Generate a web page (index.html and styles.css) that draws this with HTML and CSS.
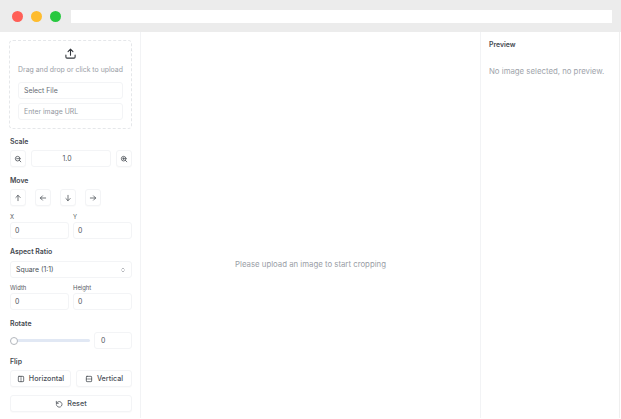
FILE: index.html
```html
<!DOCTYPE html>
<html lang="en">
<head>
<meta charset="utf-8">
<title>Image Crop</title>
<link rel="stylesheet" href="styles.css">
</head>
<body>
<div class="window">
  <header class="chrome">
    <span class="dot red"></span><span class="dot yellow"></span><span class="dot green"></span>
    <div class="address"></div>
  </header>
  <main class="app">
    <aside class="sidebar">
      <section class="drop">
        <svg class="upload" viewBox="0 0 24 24"><path d="M12 15V4M7.500 8.500 12 4l4.500 4.500M3.500 15v3.500a2 2 0 0 0 2 2h13a2 2 0 0 0 2-2V15"/></svg>
        <p class="drop-text">Drag and drop or click to upload</p>
        <div class="field drop-field dark">Select File</div>
        <div class="field drop-field muted">Enter image URL</div>
      </section>

      <h3 class="label scale-label">Scale</h3>
      <div class="row scale-row">
        <button class="btn square"><svg class="ico" viewBox="0 0 24 24"><circle cx="11" cy="11" r="7"/><path d="m20.500 20.500-4.500-4.500M8 11h6"/></svg></button>
        <div class="field center grow">1.0</div>
        <button class="btn square"><svg class="ico" viewBox="0 0 24 24"><circle cx="11" cy="11" r="7"/><path d="m20.500 20.500-4.500-4.500M8 11h6M11 8v6"/></svg></button>
      </div>

      <h3 class="label">Move</h3>
      <div class="row move-row">
        <button class="btn square"><svg class="ico" viewBox="0 0 24 24"><path d="M12 20V4M5.500 10.500 12 4l6.500 6.500"/></svg></button>
        <button class="btn square"><svg class="ico" viewBox="0 0 24 24"><path d="M20 12H4M10.500 5.500 4 12l6.500 6.500"/></svg></button>
        <button class="btn square"><svg class="ico" viewBox="0 0 24 24"><path d="M12 4v16M5.500 13.500 12 20l6.500-6.500"/></svg></button>
        <button class="btn square"><svg class="ico" viewBox="0 0 24 24"><path d="M4 12h16M13.500 5.500 20 12l-6.500 6.500"/></svg></button>
      </div>
      <div class="pair">
        <div class="col"><span class="mini">X</span><div class="field">0</div></div>
        <div class="col"><span class="mini">Y</span><div class="field">0</div></div>
      </div>

      <h3 class="label aspect-label">Aspect Ratio</h3>
      <div class="field select"><span>Square (1:1)</span>
        <svg class="chev" viewBox="0 0 24 24"><path d="m7 9 5-5 5 5M7 15l5 5 5-5"/></svg>
      </div>
      <div class="pair wh">
        <div class="col"><span class="mini">Width</span><div class="field">0</div></div>
        <div class="col"><span class="mini">Height</span><div class="field">0</div></div>
      </div>

      <h3 class="label rotate-label">Rotate</h3>
      <div class="row rotate-row">
        <div class="slider"><span class="thumb"></span></div>
        <div class="field rotate-field">0</div>
      </div>

      <h3 class="label flip-label">Flip</h3>
      <div class="row flip-row">
        <button class="btn wide horiz"><svg class="ico" viewBox="0 0 24 24"><rect x="4" y="4" width="16" height="16" rx="2"/><path d="M12 4v3M12 10.500v3M12 17v3"/></svg>Horizontal</button>
        <button class="btn wide vert"><svg class="ico" viewBox="0 0 24 24"><rect x="4" y="4" width="16" height="16" rx="2"/><path d="M4 12h3M10.500 12h3M17 12h3"/></svg>Vertical</button>
      </div>
      <button class="btn wide reset"><svg class="ico" viewBox="0 0 24 24"><path d="M4 4v6h6"/><path d="M4.500 10a8.500 8.500 0 1 1-.5 4"/></svg>Reset</button>
    </aside>

    <section class="canvas"><p>Please upload an image to start cropping</p></section>

    <aside class="preview">
      <h3 class="label">Preview</h3>
      <p class="empty">No image selected, no preview.</p>
    </aside>
  </main>
</div>
</body>
</html>
```
FILE: styles.css
```css
* { box-sizing: border-box; }
html, body { margin: 0; height: 100%; background: #fff; }
body { font-family: Inter, "Liberation Sans", sans-serif; color: #3a3f47; overflow: hidden; }
.window { width: 621px; height: 419px; display: flex; flex-direction: column; }

.chrome { height: 32px; flex: none; background: #ececec; display: flex; align-items: center; padding: 0 9px 0 12px; }
.dot { width: 11px; height: 11px; border-radius: 50%; margin-right: 8px; }
.red { background: #ff5f57; }
.yellow { background: #febc2e; }
.green { background: #28c840; }
.address { flex: 1; height: 13px; background: #fff; margin-left: 2px; }

.app { flex: 1; display: flex; height: 386px; margin-right: 1px; margin-bottom: 1px; border-right: 1px solid #efefef; }
.sidebar { width: 141px; flex: none; border-right: 1px solid #f2f3f5; padding: 8px 8px 0 10px; display: flex; flex-direction: column; }
.canvas { flex: 1; display: flex; align-items: center; justify-content: center; padding-top: 78px; }
.canvas p { margin: 0; font-size: 7.800px; color: #9a9ea6; white-space: nowrap; }
.preview { width: 139px; flex: none; border-left: 1px solid #f2f3f5; padding: 8px; }
.preview .label { margin: 0; }
.empty { margin: 16px 0 0; font-size: 7.800px; color: #a0a4ab; line-height: 11px; white-space: nowrap; }

.drop { width: 123px; height: 89px; margin-left: -1px; border: 1px dashed #e5e7ea; border-radius: 4px; display: flex; flex-direction: column; align-items: center; padding: 6px 8px 0; }
.upload { width: 13px; height: 13px; fill: none; stroke: #33373d; stroke-width: 2; stroke-linecap: round; stroke-linejoin: round; }
.drop-text { margin: 4px 0 7px; font-size: 6.900px; line-height: 11px; color: #9a9ea6; white-space: nowrap; }
.field { height: 17px; border: 1px solid #f3f4f6; border-radius: 3px; font-size: 6.900px; line-height: 15px; padding: 0 4px; color: #50555d; background: #fff; }
.drop-field { width: 105px; flex: none; margin-bottom: 4px; padding: 0 5px; }
.dark { color: #666b73; }
.muted { color: #94989f; }

.label { margin: 9px 0 3px; font-size: 6.900px; line-height: 10px; font-weight: 600; color: #44484f; }
.scale-label { margin-top: 8px; }
.row { display: flex; align-items: center; }
.btn { font: inherit; border: 1px solid #f3f4f6; border-radius: 3px; background: #fff; padding: 0; display: flex; align-items: center; justify-content: center; color: #4b5058; box-shadow: 0 1px 1px rgba(0,0,0,.02); }
.square { width: 16px; height: 17px; flex: none; }
.ico { width: 8px; height: 8px; fill: none; stroke: #3f444b; stroke-width: 2.200; stroke-linecap: round; stroke-linejoin: round; }
.scale-row { gap: 5px; }
.center { text-align: center; padding: 0 9px 0 1px; }
.grow { flex: 1; }
.move-row { gap: 9px; }

.pair { display: flex; gap: 4px; margin-top: 6px; }
.col { flex: 1; display: flex; flex-direction: column; }
.mini { font-size: 5.900px; line-height: 9px; margin-bottom: 1px; color: #565b63; }
.aspect-label { margin-top: 8px; margin-bottom: 4px; }
.select { display: flex; align-items: center; justify-content: space-between; padding: 0 5px; color: #4a4f57; }
.chev { width: 6px; height: 6px; fill: none; stroke: #8b8f96; stroke-width: 2.500; stroke-linecap: round; stroke-linejoin: round; }
.pair.wh { margin-top: 5px; }
.rotate-label { margin-top: 9px; margin-bottom: 3px; }
.rotate-row { gap: 4px; }
.slider { flex: 1; height: 3px; border-radius: 2px; background: #e1e8f4; display: flex; align-items: center; }
.thumb { width: 8px; height: 8px; flex: none; border-radius: 50%; background: #fff; border: 1px solid #b3b7bd; }
.rotate-field { width: 38px; flex: none; padding: 0 6px; }
.flip-label { margin-top: 8px; margin-bottom: 3px; }
.flip-row { gap: 5px; }
.wide { height: 17px; font-size: 7.200px; font-weight: 500; gap: 4px; }
.horiz { width: 61px; flex: none; }
.vert { flex: 1; }
.reset { width: 122px; margin-top: 8px; }
```
